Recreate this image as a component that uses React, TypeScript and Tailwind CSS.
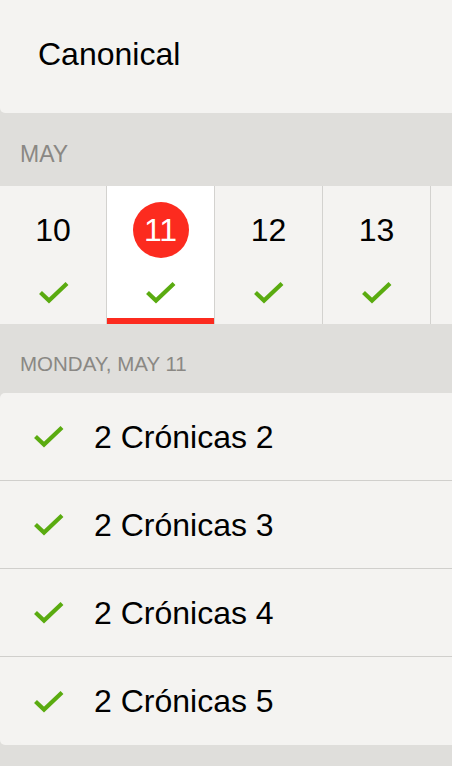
const days = [
  { n: 10, w: "w-[107px]" },
  { n: 11, w: "w-[108px]", selected: true },
  { n: 12, w: "w-[108px]" },
  { n: 13, w: "w-[108px]" },
];

const readings = ["2 Crónicas 2", "2 Crónicas 3", "2 Crónicas 4", "2 Crónicas 5"];

const Check = (): JSX.Element => (
  <svg width="31" height="23" viewBox="0 0 31 23" fill="none">
    <path d="M2.5 11.5 L11 19.5 L29 2.5" stroke="#5aab10" strokeWidth="4.2" strokeLinecap="butt" strokeLinejoin="miter" />
  </svg>
);

const App = (): JSX.Element => (
  <div className="w-[452px] h-[766px] overflow-hidden bg-[#dfdedb] font-['Liberation_Sans',Arial,sans-serif]">
    <div className="h-[113px] bg-[#f4f3f1] rounded-bl-[5px] pt-[38px] pl-[38px] text-[32px] leading-[32px] text-black">
      Canonical
    </div>

    <div className="h-[73px] pt-[30px] px-5 text-[23px] leading-[23px] text-[#8a8884]">MAY</div>

    <div className="flex h-[138px] bg-[#f4f3f1]">
      {days.map((d) => (
        <div
          key={d.n}
          className={`${d.w} shrink-0 flex flex-col items-center border-r border-[#d3d2cf] ${d.selected ? "bg-white" : ""}`}
        >
          <div
            className={`mt-[16px] w-[56px] h-[56px] flex items-center justify-center rounded-full text-[32px] leading-none ${
              d.selected ? "bg-[#fc2b1f] text-white" : "text-black"
            }`}
          >
            {d.n}
          </div>
          <div className="mt-[23px]">
            <Check />
          </div>
          {d.selected && <div className="mt-auto w-full h-[6px] bg-[#fc2b1f]" />}
        </div>
      ))}
      <div className="flex-1" />
    </div>

    <div className="h-[69px] pt-[29px] px-5 text-[20.5px] leading-[21px] text-[#8a8884]">MONDAY, MAY 11</div>

    <div className="bg-[#f4f3f1] rounded-l-[5px]">
      {readings.map((r, i) => (
        <div
          key={r}
          className={`h-[88px] flex items-center ${i < readings.length - 1 ? "border-b border-[#d0cfcc]" : ""}`}
        >
          <div className="w-[94px] pl-[33px]">
            <Check />
          </div>
          <span className="text-[32px] leading-none text-black">{r}</span>
        </div>
      ))}
    </div>
  </div>
);

export default App;
